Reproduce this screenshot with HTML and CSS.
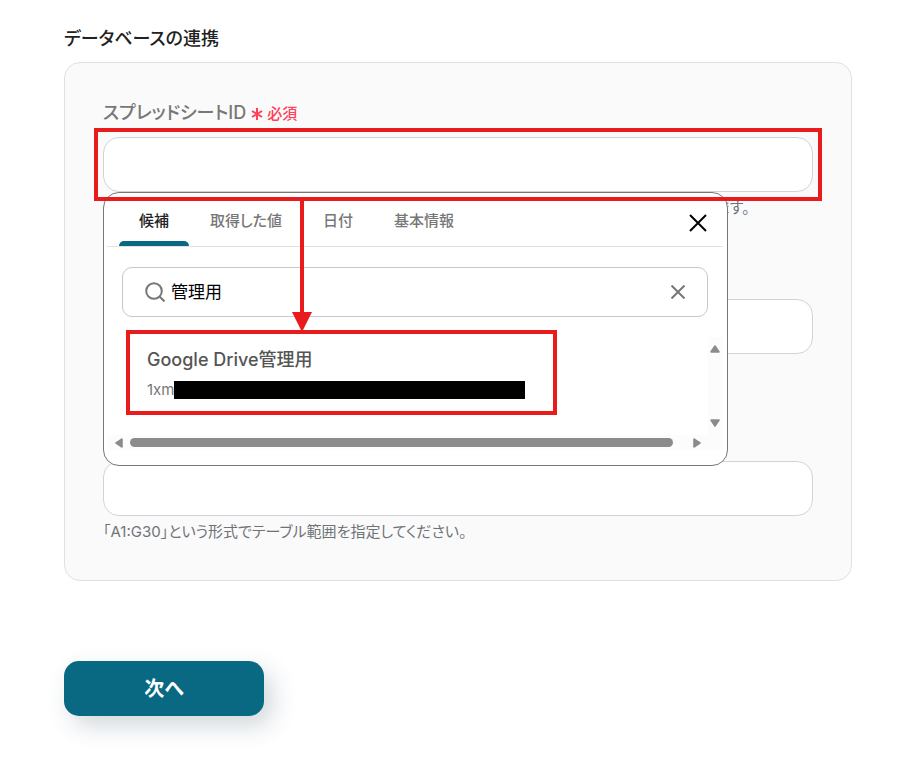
FILE: index.html
```
<!DOCTYPE html>
<html lang="ja">
  <head>
    <meta charset="UTF-8" />
    <meta name="viewport" content="width=device-width, initial-scale=1.0" />
    <title>データベースの連携</title>
    <link rel="stylesheet" href="styles.css">
  </head>
  <body>
    <main class="page">
      <h1>データベースの連携</h1>
      <form id="databaseForm">
        <div class="panel">
          <div class="field">
            <div class="field-label">
              <label for="spreadsheetId">スプレッドシートID</label>
              <span class="required">
                <svg width="12" height="14" viewBox="0 0 12 14" aria-hidden="true">
                  <path d="M6 1v12M1 4l10 6M11 4L1 10" />
                </svg>
                必須
              </span>
            </div>
            <div class="control">
              <input class="text-input" type="text" id="spreadsheetId" required />
              <div class="highlight highlight-input"></div>
              <div class="popover">
                <div class="tabs">
                  <button type="button" class="tab active">候補</button>
                  <button type="button" class="tab">取得した値</button>
                  <button type="button" class="tab">日付</button>
                  <button type="button" class="tab">基本情報</button>
                  <button type="button" class="close" aria-label="閉じる">
                    <svg width="18" height="18" viewBox="0 0 18 18">
                      <path d="M1 1l16 16M17 1L1 17" />
                    </svg>
                  </button>
                </div>
                <div class="search">
                  <svg class="search-icon" width="20" height="20" viewBox="0 0 20 20" aria-hidden="true">
                    <circle cx="9" cy="9" r="7.8" />
                    <path d="M14.5 14.5l5 5" />
                  </svg>
                  <input type="text" class="search-input" aria-label="検索" value="管理用" />
                  <button type="button" class="clear" aria-label="クリア">
                    <svg width="14" height="14" viewBox="0 0 14 14">
                      <path d="M0.5 0.5l13 13M13.5 0.5l-13 13" />
                    </svg>
                  </button>
                </div>
                <div class="results">
                  <div class="result-list">
                    <button type="button" class="result">
                      <span class="result-name">Google Drive管理用</span>
                      <span class="result-id">1xm<span class="mask"></span></span>
                      <span class="highlight highlight-result"></span>
                    </button>
                  </div>
                  <div class="scroll-y">
                    <svg width="10" height="8" viewBox="0 0 10 8">
                      <path d="M5 1.2L8.7 6.8H1.3z" />
                    </svg>
                    <svg width="10" height="8" viewBox="0 0 10 8">
                      <path d="M5 6.8L8.7 1.2H1.3z" />
                    </svg>
                  </div>
                  <div class="scroll-x">
                    <svg width="8" height="10" viewBox="0 0 8 10">
                      <path d="M1.2 5L6.8 1.3v7.4z" />
                    </svg>
                    <div class="thumb"></div>
                    <svg width="8" height="10" viewBox="0 0 8 10">
                      <path d="M6.8 5L1.2 1.3v7.4z" />
                    </svg>
                  </div>
                </div>
                <div class="arrow">
                  <div class="arrow-line"></div>
                  <svg width="20" height="20" viewBox="0 0 20 20" aria-hidden="true">
                    <path d="M0 0h20L10 20z" />
                  </svg>
                </div>
              </div>
            </div>
            <p class="help">候補からスプレッドシートを選択するか、スプレッドシートのURLから得たIDを入力することができます。</p>
          </div>
          <div class="field">
            <div class="field-label">
              <label for="sheetName">シート名</label>
            </div>
            <input class="text-input" type="text" id="sheetName" />
          </div>
          <div class="field">
            <div class="field-label">
              <label for="tableRange">テーブル範囲</label>
            </div>
            <input class="text-input" type="text" id="tableRange" />
            <p class="help">「A1:G30」という形式でテーブル範囲を指定してください。</p>
          </div>
        </div>
        <button type="submit" class="next">次へ</button>
      </form>
    </main>
  </body>
</html>
```

FILE: styles.css
```
* {
  box-sizing: border-box;
}

body {
  margin: 0;
  background-color: #fff;
  color: #222;
  font-family: Inter, "Noto Sans CJK JP", sans-serif;
  font-feature-settings: "palt";
}

button,
input {
  font: inherit;
  font-feature-settings: inherit;
}

button {
  padding: 0;
  border: none;
  background: none;
  cursor: pointer;
}

svg {
  display: block;
  flex: none;
}

.page {
  padding: 26px 69px 40px 64px;
}

h1 {
  margin: 0 0 10px;
  font-size: 18px;
  font-weight: 500;
  line-height: 26px;
}

.panel {
  display: flex;
  flex-direction: column;
  gap: 45px;
  padding: 38px;
  border: 1px solid #e0e1e5;
  border-radius: 16px;
  background-color: #fafafa;
}

.field {
  min-height: 117px;
}

.field-label {
  display: flex;
  align-items: center;
  gap: 5px;
  margin-bottom: 12px;
  color: #777;
  font-size: 18px;
  font-weight: 500;
  line-height: 24px;
}

.required {
  display: flex;
  align-items: center;
  gap: 4px;
  padding-top: 2px;
  color: #ff4058;
  font-size: 15px;
  line-height: 22px;
}

.required svg {
  fill: none;
  stroke: #ff4058;
  stroke-width: 2;
}

.control {
  position: relative;
}

.text-input {
  display: block;
  width: 100%;
  height: 55px;
  padding: 0 16px;
  border: 1px solid #d0d4da;
  border-radius: 16px;
  background-color: #fff;
}

.help {
  margin: 6px 0 0;
  color: #6f7378;
  font-size: 15px;
  line-height: 20px;
}

/* candidate popover */
.popover {
  position: absolute;
  top: 100%;
  left: 0;
  z-index: 1;
  width: 88%;
  padding: 0 4px 15px 3px;
  border: 1px solid #777;
  border-radius: 16px;
  background-color: #fff;
}

.tabs {
  display: flex;
  gap: 1px;
  height: 54px;
  padding: 0 16px 0 12px;
  border-bottom: 1px solid #e2e2e2;
}

.tab {
  padding: 0 20px;
  color: #777;
  font-size: 15px;
  font-weight: 500;
}

.tab.active {
  position: relative;
  color: #222;
}

.tab.active::after {
  content: "";
  position: absolute;
  right: 0;
  bottom: 0;
  left: 0;
  height: 5px;
  border-radius: 5px 5px 0 0;
  background-color: #0a6982;
}

.close {
  margin-left: auto;
  padding-top: 6px;
}

.close svg {
  fill: none;
  stroke: #000;
  stroke-width: 2;
}

.search {
  display: flex;
  align-items: center;
  gap: 6px;
  height: 50px;
  margin: 20px 15px;
  padding: 0 22px;
  border: 1px solid #c8c8c8;
  border-radius: 10px;
}

.search svg {
  fill: none;
  stroke: #777;
  stroke-width: 2;
}

.search-input {
  flex: 1;
  min-width: 0;
  padding: 0 0 3px;
  border: none;
  outline: none;
  background: none;
  color: #000;
  font-size: 17px;
}

.results {
  display: grid;
  grid-template-columns: 1fr 15px;
  grid-template-rows: 98px 15px;
}

.result-list {
  padding: 0 19px;
}

.result {
  position: relative;
  display: block;
  padding: 10px 32px 15px 21px;
  text-align: left;
}

.result-name {
  display: block;
  color: #555;
  font-size: 18px;
  font-weight: 500;
  line-height: 26px;
}

.result-id {
  display: flex;
  align-items: center;
  margin-top: 7px;
  color: #777;
  font-size: 15px;
  line-height: 20px;
}

.mask {
  width: 351px;
  height: 18px;
  background-color: #000;
}

.scroll-y,
.scroll-x {
  display: flex;
  align-items: center;
  justify-content: space-between;
  background-color: #fcfcfc;
}

.scroll-y {
  flex-direction: column;
  padding: 8px 0;
}

.scroll-x {
  grid-column: 1 / -1;
  padding: 0 22px 0 8px;
}

.scroll-y svg,
.scroll-x svg {
  fill: #8b8b8b;
  stroke: #8b8b8b;
  stroke-width: 2;
  stroke-linejoin: round;
}

.thumb {
  flex: 1;
  height: 9px;
  margin: 0 20px 0 7px;
  border-radius: 5px;
  background-color: #8b8b8b;
}

/* red guide marks */
.highlight {
  position: absolute;
  border: 4px solid #e81c1c;
  pointer-events: none;
}

.highlight-input {
  inset: -9px;
  z-index: 2;
}

.highlight-result {
  inset: -7px 0 0;
}

.arrow {
  position: absolute;
  top: 7px;
  left: 188px;
  display: flex;
  flex-direction: column;
  align-items: center;
  height: 132px;
  pointer-events: none;
}

.arrow-line {
  flex: 1;
  width: 4px;
  background-color: #e81c1c;
}

.arrow svg {
  fill: #e81c1c;
}

.next {
  display: block;
  width: 200px;
  height: 55px;
  margin-top: 80px;
  padding-bottom: 2px;
  border-radius: 15px;
  background-color: #0a6982;
  box-shadow: 8px 10px 24px rgba(30, 60, 80, 0.2);
  color: #fff;
  font-size: 20px;
  font-weight: 700;
}
```
